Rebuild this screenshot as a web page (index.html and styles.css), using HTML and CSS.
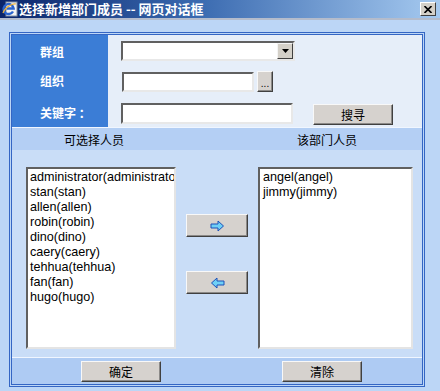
FILE: index.html
```html
<!DOCTYPE html>
<html lang="zh-CN">
<head>
    <meta charset="UTF-8">
    <meta name="viewport" content="width=device-width, initial-scale=1.0">
    <title>选择新增部门成员</title>
    <link rel="stylesheet" href="styles.css">
</head>
<body>
    <div class="titlebar">
        <svg class="ie-icon" width="16" height="16" viewBox="0 0 16 16">
            <rect x="4" y="1" width="11" height="14" fill="#f4f4f4" stroke="#8090a8"/>
            <path d="M11 10.5 A5 5 0 1 1 11.6 7.5 L4.5 7.5" fill="none" stroke="#2a64d0" stroke-width="2.4"/>
            <path d="M1 12 C3 6 11 2 14 3" fill="none" stroke="#e8b040" stroke-width="1.2"/>
        </svg>
        <span class="title">选择新增部门成员 -- 网页对话框</span>
        <span class="close-btn">
            <svg width="8" height="7" viewBox="0 0 8 7">
                <path d="M0.5 0 L7.5 7 M7.5 0 L0.5 7" stroke="#000" stroke-width="1.6"/>
            </svg>
        </span>
    </div>
    <div class="client">
        <div class="frame">
            <div class="form">
                <div class="label">群组</div>
                <div class="field">
                    <div class="select">
                        <span class="select-arrow">
                            <svg width="7" height="4" viewBox="0 0 7 4"><path d="M0 0 H7 L3.5 4 Z" fill="#000"/></svg>
                        </span>
                    </div>
                </div>
                <div class="label label-org">组织</div>
                <div class="field">
                    <div class="text-input org-input"></div>
                    <span class="btn dots-btn">...</span>
                </div>
                <div class="label label-key">关键字 ：</div>
                <div class="field">
                    <div class="text-input key-input"></div>
                    <span class="btn search-btn">搜寻</span>
                </div>
            </div>
            <div class="head">
                <span class="head-left">可选择人员</span>
                <span class="head-right">该部门人员</span>
            </div>
            <div class="lists">
                <div class="listbox list-left">
                    <div>administrator(administrator)</div>
                    <div>stan(stan)</div>
                    <div>allen(allen)</div>
                    <div>robin(robin)</div>
                    <div>dino(dino)</div>
                    <div>caery(caery)</div>
                    <div>tehhua(tehhua)</div>
                    <div>fan(fan)</div>
                    <div>hugo(hugo)</div>
                </div>
                <div class="move-buttons">
                    <span class="btn arrow-btn">
                        <svg width="15" height="12" viewBox="0 0 15 12">
                            <path d="M1 4 H8 V1 L13.5 6 L8 11 V8 H1 Z" fill="#6fd0f6" stroke="#1d50b8" stroke-width="1"/>
                        </svg>
                    </span>
                    <span class="btn arrow-btn">
                        <svg width="15" height="12" viewBox="0 0 15 12">
                            <path d="M14 4 H7 V1 L1.5 6 L7 11 V8 H14 Z" fill="#6fd0f6" stroke="#1d50b8" stroke-width="1"/>
                        </svg>
                    </span>
                </div>
                <div class="listbox list-right">
                    <div>angel(angel)</div>
                    <div>jimmy(jimmy)</div>
                </div>
            </div>
            <div class="foot">
                <span class="btn foot-btn">确定</span>
                <span class="btn foot-btn">清除</span>
            </div>
        </div>
    </div>
</body>
</html>
```

FILE: styles.css
```css
body {
    margin: 0;
    padding: 0;
    background-color: #bcd6f6;
    font-family: "Noto Sans CJK SC", "Liberation Sans", sans-serif;
    font-size: 12px;
    color: #000;
    height: 391px;
    overflow: hidden;
}
.titlebar {
    height: 18px;
    display: flex;
    align-items: center;
    background: linear-gradient(to right, #0a246a, #3a6ab0 45%, #a6caf0);
    border-bottom: 2px solid #b4bccc;
}
.ie-icon {
    margin-left: 2px;
    margin-right: 1px;
}
.title {
    color: white;
    font-weight: bold;
    font-size: 13px;
    line-height: 18px;
    white-space: nowrap;
}
.close-btn {
    margin-left: auto;
    margin-right: 4px;
    width: 14px;
    height: 12px;
    background-color: #d4d0c8;
    border: 1px solid;
    border-color: #fff #404040 #404040 #fff;
    display: flex;
    align-items: center;
    justify-content: center;
}
.client {
    padding: 12px 15px 0 9px;
}
.frame {
    width: 410px;
    height: 349px;
    border: 3px double #3466c4;
    display: flex;
    flex-direction: column;
}
.form {
    display: grid;
    grid-template-columns: 96px 1fr;
    grid-template-rows: 32px 29px 31px;
    background-color: #e6eef9;
}
.label {
    background-color: #3b7dd6;
    color: white;
    font-weight: bold;
    padding-left: 28px;
    display: flex;
    align-items: center;
}
.label-org {
    align-items: flex-start;
    padding-top: 5px;
}
.label-key {
    padding-top: 2px;
}
.field {
    display: flex;
    align-items: center;
    padding-left: 13px;
}
.select, .text-input {
    box-sizing: border-box;
    height: 20px;
    background-color: white;
    border: 2px solid;
    border-color: #606060 #e8e8e8 #e8e8e8 #606060;
}
.select {
    width: 174px;
    display: flex;
    justify-content: flex-end;
}
.select-arrow {
    box-sizing: border-box;
    width: 16px;
    height: 16px;
    background-color: #d4d0c8;
    border: 1px solid;
    border-color: #f4f4f4 #404040 #404040 #f4f4f4;
    display: flex;
    align-items: center;
    justify-content: center;
}
.org-input {
    width: 132px;
    margin-left: 1px;
}
.key-input {
    width: 172px;
    height: 21px;
    margin-top: 4px;
}
.btn {
    box-sizing: border-box;
    background-color: #d6d2ce;
    border: 1px solid;
    border-color: #f8f8f8 #404040 #404040 #f8f8f8;
    box-shadow: inset -1px -1px #8c8a88;
    display: flex;
    align-items: center;
    justify-content: center;
    font-size: 12px;
}
.dots-btn {
    width: 16px;
    height: 21px;
    margin-left: 3px;
    font-family: "Liberation Sans", sans-serif;
    font-size: 10px;
    padding-top: 3px;
}
.search-btn {
    width: 80px;
    height: 21px;
    margin-left: 20px;
    margin-top: 6px;
}
.head {
    height: 22px;
    background-color: #b4cff4;
    border-top: 1px solid #f0f6ff;
    display: flex;
    align-items: center;
}
.head-left {
    margin-left: 52px;
}
.head-right {
    margin-left: 173px;
}
.lists {
    height: 207px;
    box-sizing: border-box;
    background-color: #c9ddf7;
    padding: 17px 0 0 14px;
    display: flex;
    align-items: flex-start;
}
.listbox {
    box-sizing: border-box;
    height: 182px;
    background-color: white;
    border: 2px solid;
    border-color: #606060 #e4e4e4 #e4e4e4 #606060;
    font-family: "Liberation Sans", Arial, sans-serif;
    font-size: 12.6px;
    line-height: 15px;
    padding: 1px 0 0 2px;
    overflow: hidden;
    white-space: nowrap;
}
.list-left {
    width: 150px;
}
.list-right {
    width: 155px;
    padding-left: 3px;
}
.move-buttons {
    width: 62px;
    margin: 47px 10px 0 10px;
    display: flex;
    flex-direction: column;
    gap: 34px;
}
.arrow-btn {
    width: 62px;
    height: 23px;
}
.foot {
    flex: 1;
    background-color: #aecbf3;
    border-top: 1px solid #f0f6ff;
    display: flex;
    align-items: center;
    padding-left: 69px;
    gap: 121px;
}
.foot-btn {
    width: 80px;
    height: 21px;
}
```
